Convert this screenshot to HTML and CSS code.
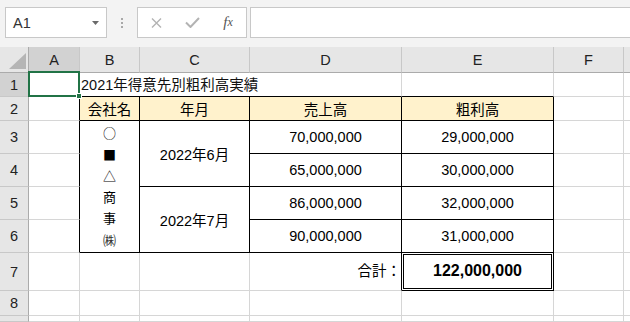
FILE: index.html
```html
<!DOCTYPE html>
<html lang="ja">
<head>
<meta charset="utf-8">
<link rel="stylesheet" href="styles.css">
</head>
<body>
<div class="fbar">
  <div class="namebox"><span>A1</span><svg width="7" height="4" viewBox="0 0 7 4"><polygon points="0,0 7,0 3.5,4" fill="#6a6a6a"/></svg></div>
  <div class="dots"><svg width="2" height="10" viewBox="0 0 2 10"><rect x="0" y="0" width="2" height="2" fill="#a8a8a8"/><rect x="0" y="4" width="2" height="2" fill="#a8a8a8"/><rect x="0" y="8" width="2" height="2" fill="#a8a8a8"/></svg></div>
  <div class="fnbox">
    <span class="slot"><svg width="11" height="10" viewBox="0 0 11 10"><path d="M1 0.5 L10 9.5 M10 0.5 L1 9.5" stroke="#b3b3b3" stroke-width="1.4" fill="none"/></svg></span>
    <span class="slot"><svg width="15" height="11" viewBox="0 0 15 11"><polyline points="1,5.5 5.5,10 14,1" stroke="#b3b3b3" stroke-width="2" fill="none"/></svg></span>
    <span class="slot fx"><i>f</i><i class="fxx">x</i></span>
  </div>
  <div class="input"></div>
</div>
<div class="sheet">
  <!-- header -->
  <div class="c h corner"><svg width="17" height="16" viewBox="0 0 17 16"><polygon points="17,0 17,16 0,16" fill="#b5b5b5"/></svg></div>
  <div class="c h sel">A</div>
  <div class="c h">B</div>
  <div class="c h">C</div>
  <div class="c h">D</div>
  <div class="c h">E</div>
  <div class="c h">F</div>
  <div class="c h g"></div>
  <!-- row 1 -->
  <div class="c r sel">1</div>
  <div class="c a1"><div class="selbox"><div class="handle"></div></div></div>
  <div class="c bb title">2021年得意先別粗利高実績</div>
  <div class="c bb"></div>
  <div class="c"></div>
  <div class="c g"></div>
  <!-- row 2 -->
  <div class="c r">2</div>
  <div class="c bl"></div>
  <div class="c tb th">会社名</div>
  <div class="c tb th">年月</div>
  <div class="c tb th">売上高</div>
  <div class="c tb th">粗利高</div>
  <div class="c"></div>
  <div class="c g"></div>
  <!-- row 3 -->
  <div class="c r">3</div>
  <div class="c bl"></div>
  <div class="c tb vert"><span>○</span><span>■</span><span>△</span><span>商</span><span>事</span><span class="kab">㈱</span></div>
  <div class="c tb span2">2022年6月</div>
  <div class="c tb">70,000,000</div>
  <div class="c tb">29,000,000</div>
  <div class="c"></div>
  <div class="c g"></div>
  <!-- row 4 -->
  <div class="c r">4</div>
  <div class="c bl"></div>
  <div class="c tb">65,000,000</div>
  <div class="c tb">30,000,000</div>
  <div class="c"></div>
  <div class="c g"></div>
  <!-- row 5 -->
  <div class="c r">5</div>
  <div class="c bl"></div>
  <div class="c tb span2">2022年7月</div>
  <div class="c tb">86,000,000</div>
  <div class="c tb">32,000,000</div>
  <div class="c"></div>
  <div class="c g"></div>
  <!-- row 6 -->
  <div class="c r">6</div>
  <div class="c bl"></div>
  <div class="c tb">90,000,000</div>
  <div class="c tb">31,000,000</div>
  <div class="c"></div>
  <div class="c g"></div>
  <!-- row 7 -->
  <div class="c r">7</div>
  <div class="c"></div>
  <div class="c"></div>
  <div class="c"></div>
  <div class="c bl sum">合計：</div>
  <div class="c tb tot"><div class="dbl">122,000,000</div></div>
  <div class="c"></div>
  <div class="c g"></div>
  <!-- row 8 -->
  <div class="c r">8</div>
  <div class="c"></div>
  <div class="c"></div>
  <div class="c"></div>
  <div class="c"></div>
  <div class="c"></div>
  <div class="c"></div>
  <div class="c g"></div>
  <!-- row 9 -->
  <div class="c r"></div>
  <div class="c"></div>
  <div class="c"></div>
  <div class="c"></div>
  <div class="c"></div>
  <div class="c"></div>
  <div class="c"></div>
  <div class="c g"></div>
</div>
</body>
</html>
```
FILE: styles.css
```css
* { box-sizing: border-box; margin: 0; padding: 0; }
html, body { width: 630px; height: 322px; overflow: hidden; background: #fff; }
body {
  font-family: "Liberation Sans", "Noto Sans CJK JP", sans-serif;
  font-size: 14.5px;
  color: #000;
}

/* formula bar */
.fbar {
  height: 47px;
  background: #f3f3f3;
  display: flex;
  align-items: flex-start;
  padding: 7px 0 0 5px;
}
.namebox {
  width: 102px;
  height: 31px;
  background: #fff;
  border: 1px solid #c8c8c8;
  display: flex;
  align-items: center;
  justify-content: space-between;
  padding: 0 7px 0 7px;
  color: #333;
}
.dots {
  width: 30px;
  height: 31px;
  display: flex;
  align-items: center;
  justify-content: center;
}
.fnbox {
  width: 110px;
  height: 31px;
  background: #fff;
  border: 1px solid #c8c8c8;
  display: flex;
  align-items: center;
}
.slot {
  width: 36px;
  display: flex;
  justify-content: center;
  align-items: center;
}
.fx {
  font-family: "Liberation Serif", serif;
  font-size: 15px;
  color: #555;
}
.fxx { font-size: 12px; }
.input {
  flex: 1;
  height: 31px;
  margin-left: 3px;
  margin-right: -4px;
  background: #fff;
  border: 1px solid #c8c8c8;
}

/* grid */
.sheet {
  display: grid;
  grid-template-columns: 29px 51px 60px 110px 152px 152px 70px 1fr;
  grid-template-rows: 26px 24px 24px 33px 33px 33px 33px 38px 25px 1fr;
  height: 275px;
}
.c {
  border-right: 1px solid #d6d6d6;
  border-bottom: 1px solid #d6d6d6;
  display: flex;
  align-items: center;
  justify-content: center;
  white-space: nowrap;
  min-width: 0;
}
.g { border-right: none; }
.h {
  background: #e6e6e6;
  border-right-color: #c8c8c8;
  border-bottom-color: #ababab;
  color: #222;
}
.r {
  background: #e6e6e6;
  border-right-color: #ababab;
  border-bottom-color: #c8c8c8;
  color: #222;
}
.sel { background: #d2d2d2; }
.corner {
  border-right-color: #ababab;
  justify-content: flex-end;
  align-items: flex-end;
  padding: 0 2px 3px 0;
}

.a1 { position: relative; }
.selbox {
  position: absolute;
  top: -2px;
  left: -1px;
  right: -1px;
  bottom: -1px;
  border: 2px solid #217346;
}
.handle {
  position: absolute;
  right: -4px;
  bottom: -4px;
  width: 6px;
  height: 6px;
  background: #217346;
  border: 1px solid #fff;
}

.title {
  grid-column: span 3;
  justify-content: flex-start;
  padding: 0 0 2px 1px;
  color: #111;
}
.bb { border-bottom-color: #000; }
.bl { border-right-color: #000; }
.tb { border-right-color: #000; border-bottom-color: #000; }
.th { background: #fff2cc; }

.vert {
  grid-row: span 4;
  flex-direction: column;
  align-items: stretch;
  font-family: "Noto Sans CJK JP", sans-serif;
  font-size: 13px;
  padding: 1px 0 2px;
}
.vert span {
  flex: 1;
  display: flex;
  align-items: center;
  justify-content: center;
}
.kab { color: #333; }
.span2 { grid-row: span 2; }

.sum {
  justify-content: flex-end;
  padding: 0 0 4px 0;
}
.tot {
  padding: 1px;
  align-items: stretch;
  justify-content: stretch;
}
.dbl {
  flex: 1;
  border: 1px solid #000;
  display: flex;
  align-items: center;
  justify-content: center;
  font-weight: bold;
  font-size: 16px;
  padding-bottom: 2px;
}
```
